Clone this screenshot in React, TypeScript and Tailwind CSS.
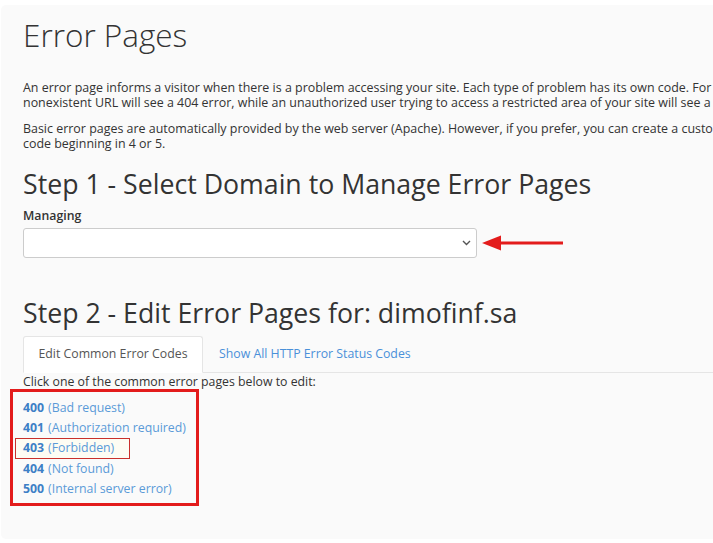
import React from 'react'

const codes = [
  { code: '400', label: '(Bad request)' },
  { code: '401', label: '(Authorization required)' },
  { code: '403', label: '(Forbidden)', highlight: true },
  { code: '404', label: '(Not found)' },
  { code: '500', label: '(Internal server error)' },
]

export default function App() {
  return (
    <div
      className="w-[713px] h-[543px] overflow-hidden bg-white text-[#333]"
      style={{ fontFamily: '"Open Sans", "Liberation Sans", sans-serif' }}
    >
      <div className="ml-[1px] mt-[5px] w-[900px] h-[534px] bg-[#fafafa] rounded-[5px] pl-[22px] pt-[10px]">
        <h1 className="text-[31.5px] leading-[40px] font-light text-[#333]">Error Pages</h1>

        <div className="mt-[25px] text-[12.45px] leading-[15px]">
          <p className="whitespace-nowrap">
            An error page informs a visitor when there is a problem accessing your site. Each type of problem has its own code. For example, a visitor who enters a
          </p>
          <p className="whitespace-nowrap">
            nonexistent URL will see a 404 error, while an unauthorized user trying to access a restricted area of your site will see a 401 error.
          </p>
        </div>
        <div className="mt-[11px] text-[12.45px] leading-[15px]">
          <p className="whitespace-nowrap">
            Basic error pages are automatically provided by the web server (Apache). However, if you prefer, you can create a custom error page for any valid HTTP status
          </p>
          <p className="whitespace-nowrap">code beginning in 4 or 5.</p>
        </div>

        <h2 className="mt-[16px] text-[26.7px] leading-[34px] font-normal">
          Step 1 - Select Domain to Manage Error Pages
        </h2>
        <label className="block mt-[7px] text-[12.3px] leading-[16px] font-semibold">Managing</label>
        <div className="mt-[4px] flex items-center">
          <div className="w-[454px] h-[30px] bg-white border border-[#ccc] rounded-[3px] flex items-center justify-end pr-[5px]">
            <svg width="9" height="6" viewBox="0 0 9 6" fill="none">
              <path d="M1 1l3.5 3.5L8 1" stroke="#555" strokeWidth="1.4" />
            </svg>
          </div>
          <svg width="84" height="20" viewBox="0 0 84 20" className="ml-[4px]">
            <polygon points="1,10 20,2.5 20,17.5" fill="#e31c1c" />
            <rect x="18" y="8.5" width="64" height="3" fill="#e31c1c" />
          </svg>
        </div>

        <h2 className="mt-[38px] text-[26.7px] leading-[34px] font-normal">
          Step 2 - Edit Error Pages for: dimofinf.sa
        </h2>

        <div className="mt-[6px] flex items-end border-b border-[#e5e5e5] text-[12.3px]">
          <div className="w-[180px] h-[37px] -mb-px bg-white border border-[#e5e5e5] border-b-white rounded-t-[3px] flex items-center justify-center text-[#555]">
            Edit Common Error Codes
          </div>
          <div className="h-[36px] px-[16px] flex items-center text-[#4a90d9]">
            Show All HTTP Error Status Codes
          </div>
        </div>

        <p className="mt-[1px] text-[12.3px] leading-[15px]">Click one of the common error pages below to edit:</p>

        <div className="-ml-[13px] mt-0 w-[189px] h-[117px] border-[3px] border-[#e31c1c] pl-[10px] pt-[6px]">
          {codes.map((c) => (
            <div
              key={c.code}
              className={
                c.highlight
                  ? '-ml-[8px] pl-[7px] w-[115px] h-[21px] border border-[#c9302c] bg-[#fdfcf3] flex items-center text-[12.3px] text-[#4a8ad0]'
                  : 'h-[20px] flex items-center text-[12.3px] text-[#4a8ad0]'
              }
            >
              <span className="font-bold text-[#3d7fc6]">{c.code}</span>
              <span className="ml-[4px] text-[#5a9ad8]">{c.label}</span>
            </div>
          ))}
        </div>
      </div>
    </div>
  )
}
